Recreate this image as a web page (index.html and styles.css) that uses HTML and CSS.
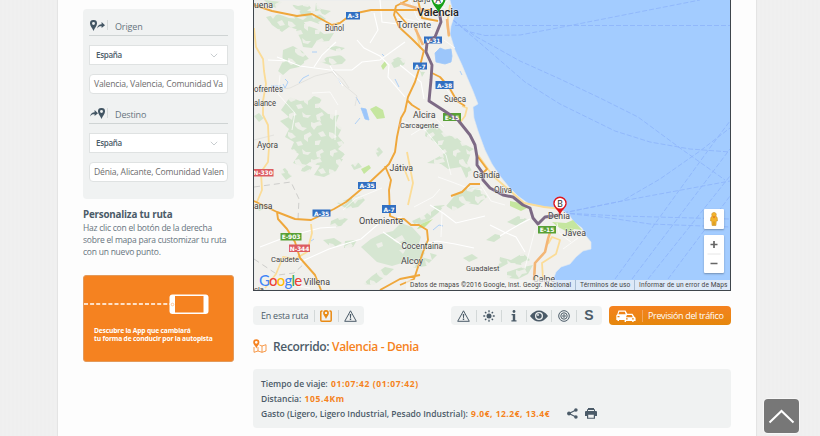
FILE: index.html
```html
<!DOCTYPE html>
<html lang="es">
<head>
    <meta charset="UTF-8">
    <meta name="viewport" content="width=device-width, initial-scale=1.0">
    <title>Valencia - Denia</title>
    <link rel="stylesheet" href="styles.css">
</head>
<body>
    <svg width="0" height="0" class="defs">
        <symbol id="pin" viewBox="0 0 7 11"><path fill-rule="evenodd" d="M3.5 0A3.4 3.4 0 0 0 0 3.5C0 6 2.2 7.5 3.5 11 4.8 7.5 7 6 7 3.5A3.4 3.4 0 0 0 3.5 0zM3.5 2a1.4 1.4 0 1 1 0 2.9 1.4 1.4 0 0 1 0-2.9z"/></symbol>
        <symbol id="arrow" viewBox="0 0 8 7"><path d="M0 6.5C.8 3.2 2.300 2.300 4.600 2.200V0L8 3.200 4.600 6V4.200C2.600 4 1.300 4.500 0 6.500z"/></symbol>
        <symbol id="warning" viewBox="0 0 13 12"><path d="M6.500 .8 12.300 11.300H.7z" fill="none" stroke="currentColor" stroke-width="1" stroke-linejoin="round"/><path d="M5.700 4h1.600L6.900 8h-.8zM5.800 8.600h1.400v1.400H5.800z"/></symbol>
    </svg>

    <div class="page">
        <div class="sidebar">
            <div class="search-panel">
                <div class="field-title">
                    <span class="field-icon"><svg width="7" height="11"><use href="#pin"/></svg><svg width="8" height="7"><use href="#arrow"/></svg></span>
                    <span class="field-name">Origen</span>
                </div>
                <div class="select"><span>España</span><svg width="8" height="5" viewBox="0 0 8 5"><path d="M.8 .8 4 4 7.200 .8"/></svg></div>
                <div class="input"><span>Valencia, Valencia, Comunidad Va</span></div>
                <div class="field-title second">
                    <span class="field-icon"><svg width="8" height="7"><use href="#arrow"/></svg><svg width="7" height="11"><use href="#pin"/></svg></span>
                    <span class="field-name">Destino</span>
                </div>
                <div class="select"><span>España</span><svg width="8" height="5" viewBox="0 0 8 5"><path d="M.8 .8 4 4 7.200 .8"/></svg></div>
                <div class="input"><span>Dénia, Alicante, Comunidad Valen</span></div>
            </div>
            <div class="help">
                <h2>Personaliza tu ruta</h2>
                <p>Haz clic con el botón de la derecha<br>sobre el mapa para customizar tu ruta<br>con un nuevo punto.</p>
            </div>
            <div class="app-banner">
                <svg width="151" height="46" viewBox="0 0 151 46">
                    <path d="M0 28h87" stroke="#fff" stroke-width="1.300" stroke-dasharray="4 2.100"/>
                    <rect x="85.500" y="18.500" width="39" height="19.500" rx="3" fill="#fff"/>
                    <rect x="91" y="20" width="28.500" height="16.500" fill="#f58220"/>
                    <circle cx="88.500" cy="28.500" r="1.300" fill="none" stroke="#f9a866" stroke-width=".6"/>
                </svg>
                <p>Descubre la App que cambiará<br>tu forma de conducir por la autopista</p>
            </div>
        </div>

        <div class="main">
            <div class="map">
                <svg class="map-canvas" viewBox="254 0 476 290" width="476" height="290">
                    <defs>
                        <pattern id="forest" width="41" height="37" patternUnits="userSpaceOnUse">
                            <rect width="41" height="37" fill="#d3e5ce"/>
                            <path fill="#edefe8" d="M2 3l5-2 3 3-4 1-1 4-3-2zM15 1l4 3 5 0-3 3-5-1zM29 4l6-3 2 3-4 2 1 4-4-1zM8 12l4-1 3 5 5 1-4 3-5-2-3-3zM24 11l3 1 6-2 2 4-5 1-3 4-3-4zM1 21l4 1 4 4-5 2-3-3zM17 24l6-3 2 3-4 3 0 4-4-3zM31 22l5-2 3 5-5 1zM9 31l5-1 2 4-5 1zM28 30l6-1-2 5-4 0z"/>
                        </pattern>
                    </defs>
                    <rect x="254" y="0" width="476" height="290" fill="#a3ccff"/>

                    <!-- ferry lines -->
                    <g class="ferry">
                        <path d="M455 25.500H730"/>
                        <path d="M453 20 466 31 485 35.500 520 35 560 27.500 700 0"/>
                        <path d="M453 20 475 36 520 61 560 79 600 98 638 117 680 148 725 180"/>
                        <path d="M453 20 480 43 525 82 560 104 615 131 650 142 690 149 730 152"/>
                        <path d="M563 213 622 201 730 181"/>
                        <path d="M563 213 622 201 660 179 700 151 730 128"/>
                        <path d="M563 213 620 216 730 219"/>
                        <path d="M563 213 610 218 650 224 730 227"/>
                        <path d="M615 279 712 145 730 121"/>
                        <path d="M632 279 730 149"/>
                        <path d="M648 279 730 176"/>
                        <path d="M668 279 730 196"/>
                    </g>

                    <path fill="#f1f0ec" stroke="#e3e9f0" stroke-width=".6" d="M254 0H450L452 8 454 17 451 26 450 34 455 50 462 65 467 77 473 91 478 104 473 107 474 118 478 131 485 150 492 164 500 176 509 187 518 196 529 204 544 207 560 209 569 215 574 222 582 228 586 236 591 242 591 249 583 251 576 257 570 264 561 267 556 272 553 280 553 290H254z"/>

                    <!-- forests -->
                    <g fill="url(#forest)">
                        <path d="M264 0 282 2 276 8 269 5zM291 4l7 2 10-2 3 4-6 4-9-3zM301 10l16 2 9 7-7 5-8-3-12 2-5-6zM266 17l12-3 11 4 11 1 7 6-8 5-10-3-7 5-10-7zM296 30l9-5 12 4 7 5 10-1-5 8-13 1-4 6-9-1-2-7zM283 50l10-4 9 5 7 8-5 4-5 4-9 2-7 6-5-4 4-8zM320 62l7-5 14-2 5 5-4 4-12 1zM327 48l9-2 9 2-6 4zM390 61l8-4 8 3-2 5-10 3z"/>
                        <path d="M290 97l10 4 8-1 6-4 8 3-4 7 10 8 11 1-3 8 6 5-4 8 6 7-6 6 7 5-5 6-13-1-6 7-11-4-7 5-10-4 6-9-8-5 3-7-9-5 4-8-9-8 9-4-8-7z"/>
                        <path d="M301 147l12-5 5 8 11-2 5 8-9 8-10 1-7-7zM321 164l12-6 10 1-7 12-12 6-10-2zM304 164l8 3-3 6-8-2zM279 171l6-3 7 8-6 4zM337 203l11-4 12-4 5 5-7 7-11 2zM331 221l9-4 8 2-7 7-11 1zM323 240l11-2 8 5-10 5zM345 241l12-1-4 7-9 1zM385 267l9 2-8 7-12 9-11-1 9-8z"/>
                        <path d="M427 124l11 3 8 8 10 2 8 7 10 5-9 5-13-5-9 3-8-10-10-6zM427 163l13-7 12-10 10-2 9 9-4 10 6 9-7 6-5-11-13 2-7-5zM457 193l13-6 10 2 7 8-9 8-11-2-13 8-8-5zM412 221l13-6 9-9 11-1-7 8-10 8-12 5zM411 262l10-5 11 3-6 6-12 2zM500 257l11 3 12-7 7 7-9 5-12-2-11 6zM507 272l12-4 14-3-5 9-10 5-11-1zM463 258l9-4 6 4-9 4zM486 240l9-6 8 2-9 6zM507 222l11-6 9 3-10 7z"/>
                        <path d="M316 3l5 6 10 2-6 4-10-4zM254 116l5-3 5 5-5 4zM375 151l4-4 4 5-5 5zM351 165l7-3 4 5-8 3zM430 253l7 2-5 5zM256 206l5-2 3 5-5 2zM420 71l5 1-3 5z"/>
                    </g>
                    <path fill="#d6e6d2" d="M361 247l10-8 10-5 12-3 8-8 11 4 9 10-3 9 7 7-5 8-15 1-13 4-15-4z"/>
                    <path fill="#edefe8" d="M393 240l9-5 3 5-8 3zM376 244l6-2 1 4-5 2zM399 250l7-1-3 5z"/>
                    <g fill="#c5e69f">
                        <path d="M370 109l6-3 7 4 2 8-8 1zM381 66l4-5 2 4-4 5zM361 169l8-4 2 3-7 6zM510 201l10 2 9 4-8 4-11-5zM552 222l14 1 7-3 9 10-8-1-4 4-12-6zM421 224l12-5-8 8-8 2z"/>
                    </g>
                    <g fill="#9cc6fa" stroke="#9cc6fa" stroke-width=".8">
                        <path d="M435 53l5-5 5 2 6-1 1 7-1 6-6 2-9-2z"/>
                        <path d="M361 108l5 1 3 11-4-1z"/>
                        <path fill="none" d="M356 97l4 7M285 79l3 3-3 6-2-4M271 86h10M299 83l4-5 6-3M338 78l3 6M312 52h5M382 54l3 3M460 71l2 4M395 79l4 8M311 241l3-2M433 230l6-5 4 1M360 118l-5 6"/>
                    </g>

                    <!-- minor roads -->
                    <g class="minor">
                        <path d="M277 57 300 66 330 70 352 70 362 62 380 60 405 42M314 67 322 55 336 42M357 40 364 48 380 56 389 65 388 77 405 97M330 66 343 86M374 13 378 30 370 43M380 0 382 22 406 25M400 65 421 82 424 99M268 60 290 61"/>
                        <path class="faint" d="M280 75 278 94 295 113 292 130M312 93 330 92 338 105M336 110 335 140M402 121 425 130 446 155 451 175M343 210 355 199 382 188M438 177 452 182 465 187 482 190M442 213 441 237M414 207 433 197 440 189M481 185 491 201 505 205M535 230 530 249 525 268M557 223 559 233 571 242M563 249 578 238M440 80 453 98 463 104M430 112 444 127M455 48 444 40M410 0 417 18 432 30M397 17 420 22 438 21M448 0 435 13M427 0 445 8M411 135 432 122M291 285 310 288"/>
                        <path d="M260 247 286 237 320 228 336 227M300 262 329 249 361 239 383 220 402 217M383 232 405 247M430 205 443 213 456 223 485 216M410 247 437 241 455 244 474 248M490 225 504 232 516 237 525 252M500 236 520 224 530 219"/>
                    </g>
                    <g class="gray-road">
                        <path d="M260 92 290 88 315 76 332 72 345 86 357 96 355 106M333 70l10 9 6 9M254 140l20-5"/>
                        <path class="border" d="M254 187 291 182 299 199 298 220M254 259 278 275 294 273 305 263"/>
                    </g>

                    <!-- yellow roads -->
                    <g class="yellow">
                        <path d="M254 28 256 47 263 59 264 71 266 84 263 101 263 115 268 125 269 147 268 162 261 172 262 190 257 202M311 224 312 233 307 252 295 259 283 257 276 274 265 288M407 152 413 183 408 205M404 168 409 181M462 106 467 108 465 116 459 124M548 244 552 237 560 240 556 254 542 263 543 279M478 155 493 176 524 203 544 207 562 209M416 28 420 48M450 5 447 25 449 37"/>
                    </g>

                    <!-- motorways -->
                    <g class="motorway">
                        <path d="M254 5 272 11 297 16 312 14 332 25 340 23 352 14 371 10 430 10M408 0 396 6 394 15 399 27 412 39 424 51M394 9 407 24M424 50 420 66 415 82 408 97 405 111 401 118 397 137 395 152 389 164 386 167 371 181 346 202 334 209 311 220 295 219 277 212 254 201M385 166 391 180 389 190 390 216 397 219 404 219 411 225 419 225 427 230 428 240 423 252 414 279 400 285M277 212 278 219 287 229 295 242 300 258 315 275 321 290M407 100 412 105 420 110M432 73 440 77 449 87 457 101 465 106M451 196 462 192 470 184 480 184M478 157 487 169 482 174M380 290 400 279 420 275M418 0 422 18 438 21"/>
                        <path class="trunk" d="M551 229 548 239 545 252 535 263 534 281M400 3 433 13M415 28 423 45M447 19 449 36"/>
                    </g>

                    <g class="shield">
                        <g fill="#316fc1"><rect x="346" y="12" width="14" height="7.500"/><rect x="424" y="36.500" width="18" height="7"/><rect x="413" y="62.500" width="14" height="7"/><rect x="435.500" y="81" width="18" height="8"/><rect x="358" y="182" width="18" height="7"/><rect x="312.500" y="209.500" width="18" height="7"/><rect x="382" y="205" width="14" height="8"/></g>
                        <g fill="#58a035"><rect x="443" y="113" width="18" height="8"/><rect x="280.500" y="233" width="21" height="7.500"/><rect x="538" y="226" width="18" height="7.500"/></g>
                        <g fill="#dc5b61"><rect x="254" y="169" width="19.500" height="7.500"/><rect x="289" y="244.500" width="21" height="7.500"/></g>
                    </g>

                    <path class="route" d="M439 11 441 22 435 37 427 43 426 52 432 65 431 80 429 101 443 110 458 120 470 135 475 145 477 157 477 165 482 172 483 180 490 188 503 195 513 197 523 205 530 208 533 218 538 224 545 217 560 215"/>

                    <g class="shield-text">
                        <text x="353" y="18">A-3</text><text x="433" y="42.500">V-31</text><text x="420" y="68.500">A-7</text><text x="444.500" y="87.500">A-38</text><text x="367" y="188">A-35</text><text x="321.500" y="215.500">A-35</text><text x="389" y="211.500">A-7</text>
                        <text x="452" y="119.500">E-15</text><text x="291" y="239">E-903</text><text x="547" y="232.300">E-15</text><text x="263" y="175.200">N-330</text><text x="299.500" y="250.700">N-344</text>
                    </g>

                    <g class="places">
                        <text x="254" y="7.500" textLength="19" lengthAdjust="spacingAndGlyphs">uena</text>
                        <text x="413" y="2" font-size="7.500">Burja</text>
                        <text class="city" x="417" y="15.500" textLength="42" lengthAdjust="spacingAndGlyphs">Valencia</text>
                        <text x="397" y="27.500" textLength="34" lengthAdjust="spacingAndGlyphs">Torrente</text>
                        <text class="town" x="325" y="31" textLength="19" lengthAdjust="spacingAndGlyphs">Buñol</text>
                        <text class="town" x="254" y="92" textLength="29" lengthAdjust="spacingAndGlyphs">ofrentes</text>
                        <text class="town" x="254" y="105.500" textLength="22" lengthAdjust="spacingAndGlyphs">alance</text>
                        <text class="town" x="257" y="148" textLength="21" lengthAdjust="spacingAndGlyphs">Ayora</text>
                        <text class="town" x="444" y="101.500" textLength="22" lengthAdjust="spacingAndGlyphs">Sueca</text>
                        <text x="413" y="118" textLength="22.500" lengthAdjust="spacingAndGlyphs">Alcira</text>
                        <text class="village" x="400" y="128" textLength="38.500" lengthAdjust="spacingAndGlyphs">Carcagente</text>
                        <text x="389.500" y="171" textLength="23.500" lengthAdjust="spacingAndGlyphs">Játiva</text>
                        <text x="473" y="177.500" textLength="27" lengthAdjust="spacingAndGlyphs">Gandía</text>
                        <text class="town" x="494" y="193" textLength="18" lengthAdjust="spacingAndGlyphs">Oliva</text>
                        <text class="town" x="254" y="209" textLength="18.500" lengthAdjust="spacingAndGlyphs">ansa</text>
                        <text x="359" y="224" textLength="44" lengthAdjust="spacingAndGlyphs">Onteniente</text>
                        <text class="village" x="271" y="262" textLength="28" lengthAdjust="spacingAndGlyphs">Caudete</text>
                        <text class="town" x="401.500" y="248.500" textLength="41.500" lengthAdjust="spacingAndGlyphs">Cocentaina</text>
                        <text x="401" y="264" textLength="22" lengthAdjust="spacingAndGlyphs">Alcoy</text>
                        <text class="town" x="303.500" y="285" textLength="26.500" lengthAdjust="spacingAndGlyphs">Villena</text>
                        <text class="village" x="466" y="270.500" textLength="33.500" lengthAdjust="spacingAndGlyphs">Guadalest</text>
                        <text x="533" y="281.500" textLength="22" lengthAdjust="spacingAndGlyphs">Calpe</text>
                        <text x="548" y="219" textLength="22" lengthAdjust="spacingAndGlyphs">Denia</text>
                        <text x="562.500" y="235.500" textLength="23.500" lengthAdjust="spacingAndGlyphs">Jávea</text>
                        <text x="254" y="291.500" font-size="7.500">cla</text>
                    </g>

                    <!-- markers -->
                    <path fill="#17a11a" d="M431.500 0C433 6 437 8 438.500 12.500 440 8 444 6 445.500 0z"/>
                    <circle cx="438.300" cy="-.5" r="5" fill="#fff"/>
                    <text class="marker" x="438.300" y="2.500">A</text>
                    <path fill="#e0141b" d="M560 196.500a6.700 6.700 0 0 0-6.700 6.700C553.300 208 559 210 560 215.500 561 210 566.700 208 566.700 203.200A6.700 6.700 0 0 0 560 196.500z"/>
                    <circle cx="560" cy="203.200" r="5.300" fill="#fff"/>
                    <text class="marker" x="560" y="206.500">B</text>
                </svg>

                <div class="google"><span class="b">G</span><span class="r">o</span><span class="y">o</span><span class="b">g</span><span class="g">l</span><span class="r">e</span></div>

                <div class="map-controls">
                    <div class="pegman">
                        <svg width="10" height="14" viewBox="0 0 10 14"><path fill="#f4b32c" stroke="#b37a15" stroke-width=".4" d="M5 .4a2.300 2.300 0 0 1 1.700 3.900C8 4.500 8.500 5.500 8.500 9H7.300L7 13.500H3L2.700 9H1.500C1.500 5.500 2 4.500 3.300 4.300A2.300 2.300 0 0 1 5 .4z"/><path d="M3.700 4.500h2.600L5 6.300z" fill="#d9641b"/><path d="M5 9.500v4" stroke="#b37a15" stroke-width=".6"/></svg>
                    </div>
                    <div class="zoom">
                        <svg width="20" height="38" viewBox="0 0 20 38"><path d="M6.500 9.500h7M10 6v7M6.500 28.500h7" stroke="#666" stroke-width="1.700"/><path d="M3.500 19h13" stroke="#e6e6e6"/></svg>
                    </div>
                </div>

                <div class="credits">
                    <span class="c1">Datos de mapas ©2016 Google, Inst. Geogr. Nacional</span>
                    <span class="c2">Términos de uso</span>
                    <span class="c3">Informar de un error de Maps</span>
                </div>
            </div>

            <div class="toolbar">
                <div class="tools tools-route">
                    <span>En esta ruta</span>
                    <i></i>
                    <svg class="orange-icon" width="12" height="12" viewBox="0 0 12 12"><path d="M2.500 1H1.800Q.8 1 .8 2v8.200q0 1 1 1h8.400q1 0 1-1V2q0-1-1-1H9.500" fill="none" stroke="currentColor" stroke-width="1.500"/><path fill-rule="evenodd" d="M6 0a2.900 2.900 0 0 0-2.900 2.900C3.100 5 5 6.300 6 9 7 6.300 8.900 5 8.900 2.900A2.900 2.900 0 0 0 6 0zM6 1.700a1.200 1.200 0 1 1 0 2.400 1.200 1.200 0 0 1 0-2.400z"/></svg>
                    <i></i>
                    <svg width="13" height="12"><use href="#warning"/></svg>
                </div>
                <div class="tools tools-layers">
                    <b><svg width="13" height="12"><use href="#warning"/></svg></b>
                    <b><svg width="12" height="12" viewBox="0 0 12 12"><circle cx="6" cy="6" r="2.500"/><path d="M6 .3v1.900M6 9.800v1.900M.3 6h1.900M9.800 6h1.900M2 2l1.300 1.300M8.700 8.700 10 10M2 10l1.300-1.300M8.700 3.300 10 2" stroke="currentColor" stroke-width="1.300"/></svg></b>
                    <b><svg width="6" height="12" viewBox="0 0 6 12"><circle cx="3" cy="1.500" r="1.400"/><path d="M.6 4h3.600v6.200h1.300v1.300H.4v-1.300h1.400V5.300H.6z"/></svg></b>
                    <b><svg width="18" height="12" viewBox="0 0 18 12"><path fill-rule="evenodd" d="M0 6Q4 .5 9 .5T18 6Q14 11.500 9 11.500T0 6zM9 2a4 4 0 1 0 0 8 4 4 0 0 0 0-8z"/><circle cx="9" cy="6" r="2.700"/><circle cx="8" cy="5" r=".9" fill="#f0f2f2"/></svg></b>
                    <b><svg class="target" width="12" height="12" viewBox="0 0 12 12"><circle cx="6" cy="6" r="5.300"/><circle cx="6" cy="6" r="3.200"/><circle cx="6" cy="6" r="1.200"/></svg></b>
                    <b class="letter">S</b>
                </div>
                <div class="forecast">
                    <svg width="20" height="12" viewBox="0 0 20 12"><path fill="#fff" fill-rule="evenodd" d="M2.500.5h7l1.800 3.200h5.200l1.900 3 1.200 1V11h-2v1h-1.400v-1H10v1H8.600v-2H3v1H1.500v-1H.3V5.200l1-1zM3.300 1.700 2.400 4.200h7.200L8.800 1.700zM10.900 5 10 7.200h6.800L15.700 5zM1.500 6v1.200h2V6zM10 8.300v1.200h1.700V8.300zM16 8.300v1.200h1.800V8.300z"/></svg>
                    <i></i>
                    <span>Previsión del tráfico</span>
                </div>
            </div>

            <h1>
                <svg width="14" height="14" viewBox="0 0 14 14"><path fill-rule="evenodd" d="M3.300.3A3.100 3.100 0 0 0 .2 3.400C.2 5.500 2.500 6.500 3.300 9.500 4.100 6.500 6.400 5.500 6.400 3.400A3.100 3.100 0 0 0 3.300.3zM3.300 2a1.300 1.300 0 1 1 0 2.700 1.300 1.300 0 0 1 0-2.700z"/><path fill="none" stroke="currentColor" stroke-width=".8" d="M1 8v5.300l4-1.300 4 1.300 4-1.300V5.700L9 7 6.500 6M5 8v4M9 7v6.300"/></svg>
                <span>Recorrido: <em>Valencia - Denia</em></span>
            </h1>

            <div class="summary">
                <p><span>Tiempo de viaje: </span><em>01:07:42 (01:07:42)</em></p>
                <p><span>Distancia: </span><em>105.4Km</em></p>
                <p><span>Gasto (Ligero, Ligero Industrial, Pesado Industrial): </span><em class="cost">9.0€, 12.2€, 13.4€</em><svg class="share" width="11" height="11" viewBox="0 0 11 11"><path d="M9 2 2 5.500 9 9" fill="none" stroke="currentColor" stroke-width="1.200"/><circle cx="8.900" cy="2" r="1.800"/><circle cx="2" cy="5.500" r="1.900"/><circle cx="8.900" cy="9" r="1.800"/></svg><svg width="12" height="11" viewBox="0 0 12 11"><path fill-rule="evenodd" d="M3 0h6v1.300h1V3h1q1 0 1 1v4h-2v2.800H2V8H0V4q0-1 1-1h1V1.300h1zM3 2v1h6V2zM3.200 6.700v3h5.600v-3z"/></svg></p>
            </div>
        </div>
    </div>

    <div class="to-top"><svg width="35" height="35" viewBox="0 0 35 35"><path d="M5.500 23.500 17.500 12 29.500 23.500" fill="none" stroke="#fff" stroke-width="2"/></svg></div>
</body>
</html>
```

FILE: styles.css
```css
* {
    box-sizing: border-box;
}

body {
    margin: 0;
    height: 436px;
    overflow: hidden;
    position: relative;
    background: repeating-linear-gradient(90deg, #efefef 0, #efefef 2px, #f0f0f0 2px, #f0f0f0 4px);
    font-family: "Open Sans", "Noto Sans", sans-serif;
    font-size: 9px;
    color: #4b5b68;
}

svg {
    display: block;
    flex: none;
    fill: currentColor;
}

.defs {
    position: absolute;
}

p, h1, h2 {
    margin: 0;
}

em {
    font-style: normal;
    color: #f58220;
}

span, em {
    white-space: nowrap;
}

.page {
    width: 700px;
    height: 436px;
    margin-left: 57px;
    padding-left: 25px;
    display: flex;
    gap: 19px;
    background: #fdfdfd;
    border-left: 1px solid #e4e4e4;
    border-right: 1px solid #e4e4e4;
}

/* Sidebar */
.sidebar {
    width: 151px;
    padding-top: 9px;
}

.search-panel {
    height: 190px;
    padding: 6px;
    background: #f0f2f2;
    border-radius: 4px;
}

.field-title {
    height: 21px;
    display: flex;
    align-items: center;
    border-bottom: 1px solid #cfd4d4;
    color: #67747e;
}

.field-title.second {
    margin-top: 9px;
}

.field-name {
    padding-top: 3px;
    letter-spacing: -0.15px;
}

.field-icon {
    display: flex;
    align-items: center;
    width: 19px;
    height: 10px;
    margin-right: 7px;
    padding-left: 1px;
    border-right: 1px solid #d6dada;
    color: #435664;
}

.select {
    height: 20px;
    margin-top: 9px;
    padding: 0 9px 0 6px;
    display: flex;
    align-items: center;
    justify-content: space-between;
    background: #fff;
    border: 1px solid #dfe2e2;
    font-size: 8px;
    font-weight: 600;
    line-height: 10px;
    letter-spacing: -0.3px;
}

.select span {
    padding-bottom: 1px;
}

.select svg {
    fill: none;
    stroke: #c8cdd0;
}

.input {
    height: 20px;
    margin-top: 9px;
    padding: 0 4px;
    font-size: 8.6px;
    line-height: 18px;
    letter-spacing: -0.16px;
    background: #fff;
    border: 1px solid #dfe2e2;
    border-radius: 4px;
    color: #6d6d6d;
    overflow: hidden;
}

.help {
    margin-top: 9px;
    line-height: 12px;
    color: #67747e;
}

.help h2 {
    font-size: 9.8px;
    line-height: 13px;
    letter-spacing: -0.2px;
    color: #4b5b68;
}

.help p {
    padding-top: 1px;
    font-size: 8.5px;
    letter-spacing: -0.23px;
    white-space: nowrap;
}

.app-banner {
    height: 87px;
    margin-top: 17px;
    background: #f58220;
    border: 1px solid #e39a5b;
    border-radius: 3px;
    color: #fff;
    overflow: hidden;
}

.app-banner p {
    padding: 4.5px 0 0 10px;
    font-size: 6.7px;
    font-weight: 700;
    line-height: 8.5px;
    letter-spacing: -0.17px;
    white-space: nowrap;
}

/* Map */
.main {
    width: 478px;
}

.map {
    position: relative;
    height: 291px;
    border: solid #3f464c;
    border-width: 0 1px 1px;
    overflow: hidden;
}

.ferry {
    fill: none;
    stroke: #8fb5fb;
    stroke-width: 0.9;
    stroke-dasharray: 5 2;
}

.minor {
    fill: none;
    stroke: #fff;
    stroke-width: 1.1;
}

.faint {
    stroke-width: 0.7;
}

.gray-road {
    fill: none;
    stroke: #dddcd9;
    stroke-width: 0.7;
}

.border {
    stroke: #bdbdbb;
    stroke-dasharray: 6 4;
}

.yellow {
    fill: none;
    stroke: #fbdc97;
    stroke-width: 1.8;
    stroke-linejoin: round;
}

.motorway {
    fill: none;
    stroke: #efa73b;
    stroke-width: 1.9;
    stroke-linejoin: round;
}

.trunk {
    stroke: #f3b676;
    stroke-width: 2.6;
}

.route {
    fill: none;
    stroke: #7d6a85;
    stroke-width: 2.9;
    stroke-linejoin: round;
}

.shield-text {
    font: bold 6px "DejaVu Sans", sans-serif;
    fill: #fff;
    text-anchor: middle;
    letter-spacing: -0.1px;
}

.places {
    font-family: Roboto, sans-serif;
    font-size: 9.2px;
    fill: #444;
    stroke: rgba(247, 246, 243, 0.6);
    stroke-width: 1.2px;
    paint-order: stroke;
}

.city {
    font-size: 10.8px;
    font-weight: 500;
    fill: #222;
}

.town {
    font-size: 8.4px;
}

.village {
    font-size: 7.6px;
}

.marker {
    font: 9px Roboto, sans-serif;
    fill: #333;
    text-anchor: middle;
}

.google {
    position: absolute;
    left: 5px;
    bottom: 1px;
    font: 500 15px/18px Lato, sans-serif;
    letter-spacing: -0.8px;
    text-shadow: 0 0 1px #fff;
}

.google .b { color: #4285f4; }
.google .r { color: #ea4335; }
.google .y { color: #fbbc05; }
.google .g { color: #34a853; }

.map-controls {
    position: absolute;
    right: 6px;
    top: 209px;
    display: flex;
    flex-direction: column;
    gap: 6px;
}

.pegman, .zoom {
    width: 20px;
    height: 20px;
    display: flex;
    align-items: center;
    justify-content: center;
    background: #fff;
    border-radius: 1px;
    box-shadow: 0 1px 2px rgba(0, 0, 0, 0.3);
}

.zoom {
    height: 38px;
}

.credits {
    position: absolute;
    right: 0;
    bottom: 0;
    display: flex;
    height: 10px;
    font: 6.6px/10px Roboto, sans-serif;
    letter-spacing: 0.11px;
    color: #444;
    background: rgba(245, 245, 245, 0.7);
}

.credits span {
    padding-left: 4px;
}

.credits span + span {
    border-left: 1px solid #a9bdd3;
}

.c1 { width: 169px; }
.c2 { width: 59px; }
.c3 { width: 96px; }

/* Buttons under the map */
.toolbar {
    display: flex;
    margin-top: 15px;
    height: 19px;
}

.tools {
    display: flex;
    align-items: center;
    background: #f0f2f2;
    border-radius: 4px;
}

.tools span, .forecast span {
    padding-bottom: 1px;
}

.tools i, .forecast i {
    width: 1px;
    height: 12px;
    background: #d3d8d8;
}

.tools-route {
    width: 111px;
    padding-left: 8px;
    gap: 5.5px;
    letter-spacing: -0.25px;
}

.orange-icon {
    color: #e98a13;
}

.tools-layers {
    width: 151px;
    margin-left: 87px;
}

.tools-layers b {
    width: 25px;
    height: 12px;
    display: flex;
    align-items: center;
    justify-content: center;
}

.tools-layers b + b {
    border-left: 1px solid #d3d8d8;
}

.target {
    fill: none;
    stroke: currentColor;
}

.tools .letter {
    padding-bottom: 2px;
    font: bold 14px/12px "Liberation Sans", sans-serif;
}

.forecast {
    width: 122px;
    margin-left: 7px;
    padding-left: 7px;
    display: flex;
    align-items: center;
    gap: 5.5px;
    background: linear-gradient(#f58220, #e5870c);
    border-radius: 4px;
    color: #fff;
    letter-spacing: -0.35px;
}

.forecast i {
    background: #f3a45a;
}

h1 {
    display: flex;
    align-items: center;
    gap: 6px;
    height: 20px;
    margin-top: 11px;
    font-size: 12px;
    font-weight: 600;
    letter-spacing: -0.34px;
}

h1 svg {
    color: #f58220;
}

.summary {
    height: 59px;
    margin-top: 13px;
    padding: 7px 8px;
    background: #f0f2f2;
    border-radius: 4px;
    font-size: 8.5px;
    font-weight: 600;
    line-height: 15px;
}

.summary p {
    display: flex;
    align-items: center;
    height: 15px;
}

.summary span {
    white-space: pre;
}

.summary em {
    margin-left: 1px;
    font-weight: 700;
    letter-spacing: 0.62px;
}

.summary .cost {
    letter-spacing: 0.5px;
}

.share {
    margin: 0 7px 0 17px;
}

.to-top {
    position: absolute;
    left: 764px;
    top: 399px;
    width: 35px;
    height: 34px;
    background: #777;
    border-radius: 4px;
    box-shadow: 0 0 0 1px #f8f8f8;
}
```
